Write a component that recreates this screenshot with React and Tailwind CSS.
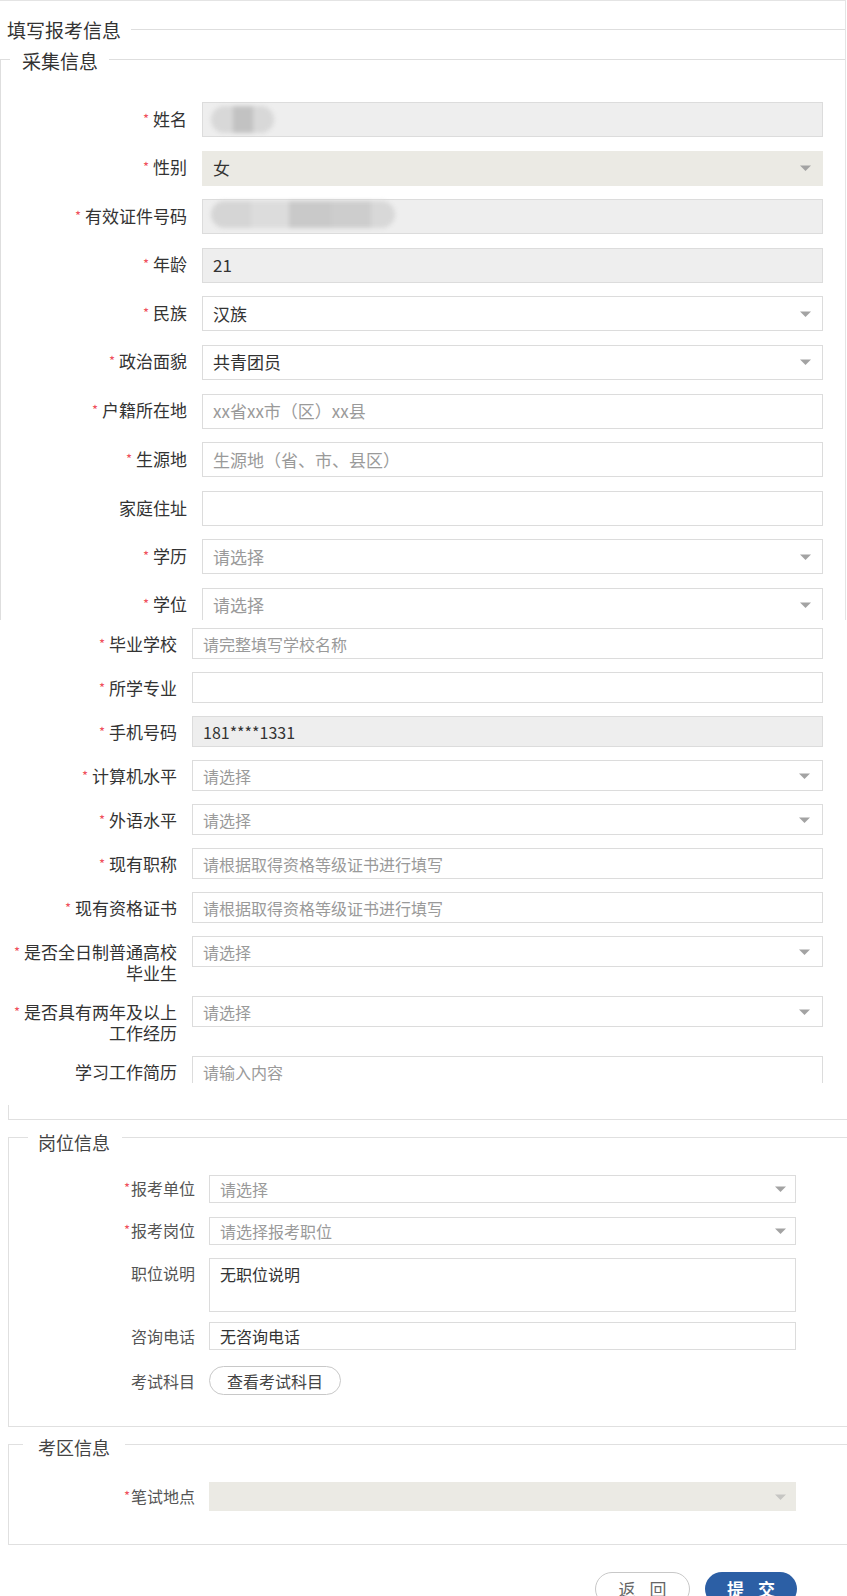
const F = "font-['Noto_Sans_CJK_SC','Microsoft_YaHei',sans-serif]";

function Star({ tight }) {
  return (
    <span className={`text-[#ef4f5b] text-[13px] relative top-[-2px] ${tight ? "mr-[1px]" : "mr-[4px]"}`}>*</span>
  );
}

function Caret({ className = "" }) {
  return (
    <svg width="11" height="6" viewBox="0 0 11 6" className={className}>
      <path d="M0 0.5h11L5.5 6z" fill="#a3a3a3" />
    </svg>
  );
}

function NameBlob() {
  return (
    <div className="flex items-center blur-[2px] -ml-[2px]">
      <div className="w-[22px] h-[27px] rounded-l-full bg-[#d8d8d8]" />
      <div className="w-[20px] h-[27px] bg-[#c2c2c2]" />
      <div className="w-[21px] h-[27px] rounded-r-full bg-[#d8d8d8]" />
    </div>
  );
}

function IdBlob() {
  return (
    <div className="flex items-center blur-[2px] -ml-[2px] -mt-[4px]">
      <div className="w-[40px] h-[27px] rounded-l-full bg-[#d5d5d5]" />
      <div className="w-[38px] h-[27px] bg-[#dcdcdc]" />
      <div className="w-[42px] h-[27px] bg-[#c9c9c9]" />
      <div className="w-[40px] h-[27px] bg-[#cdcdcd]" />
      <div className="w-[24px] h-[27px] rounded-r-full bg-[#d8d8d8]" />
    </div>
  );
}

function Field({ f, w, h, text, caretCls }) {
  const bg =
    f.kind === "disabled" ? "bg-[#eeeeee]" : f.kind === "beige" ? "bg-[#ebeae4]" : "bg-white";
  const border = f.kind === "beige" ? "border-[#ebeae4]" : "border-[#dcdcdc]";
  return (
    <div
      className={`flex items-center justify-between border ${border} ${bg} pl-[10px] ${w} ${h}`}
    >
      <div className={`${text} whitespace-nowrap`}>
        {f.blob === "name" ? (
          <NameBlob />
        ) : f.blob === "id" ? (
          <IdBlob />
        ) : f.value ? (
          <span className="text-[#333]">{f.value}</span>
        ) : (
          <span className="text-[#9a9a9a]">{f.ph}</span>
        )}
      </div>
      {f.select && <Caret className={caretCls} />}
    </div>
  );
}

const topRows = [
  { label: "姓名", req: true, kind: "disabled", blob: "name" },
  { label: "性别", req: true, kind: "beige", select: true, value: "女" },
  { label: "有效证件号码", req: true, kind: "disabled", blob: "id" },
  { label: "年龄", req: true, kind: "disabled", value: "21" },
  { label: "民族", req: true, select: true, value: "汉族" },
  { label: "政治面貌", req: true, select: true, value: "共青团员" },
  { label: "户籍所在地", req: true, ph: "xx省xx市（区）xx县" },
  { label: "生源地", req: true, ph: "生源地（省、市、县区）" },
  { label: "家庭住址", req: false, ph: "" },
  { label: "学历", req: true, select: true, ph: "请选择" },
  { label: "学位", req: true, select: true, ph: "请选择" },
];

const midRows = [
  { label: "毕业学校", req: true, ph: "请完整填写学校名称" },
  { label: "所学专业", req: true, ph: "" },
  { label: "手机号码", req: true, kind: "disabled", value: "181****1331" },
  { label: "计算机水平", req: true, select: true, ph: "请选择" },
  { label: "外语水平", req: true, select: true, ph: "请选择" },
  { label: "现有职称", req: true, ph: "请根据取得资格等级证书进行填写" },
  { label: "现有资格证书", req: true, ph: "请根据取得资格等级证书进行填写" },
  { label: "是否全日制普通高校", label2: "毕业生", req: true, select: true, ph: "请选择" },
  { label: "是否具有两年及以上", label2: "工作经历", req: true, select: true, ph: "请选择" },
];

export default function App() {
  return (
    <div className={`w-[847px] h-[1596px] overflow-hidden bg-white ${F}`}>
      {/* Block A */}
      <div className="h-[620px] overflow-hidden w-[846px] border-t border-r border-[#e4e4e4]">
        <div className="mt-[28px] border-t border-[#dedede]">
          <div className="-mt-[13px] w-fit bg-white pl-[7px] pr-[10px] text-[19px] leading-[26px] text-[#333]">
            填写报考信息
          </div>
          <div className="mt-[16px] border-t border-l border-[#dedede] pb-[40px]">
            <div className="-mt-[12px] ml-[9px] w-fit bg-white pl-[12px] pr-[11px] text-[19px] leading-[26px] text-[#333]">
              采集信息
            </div>
            <div className="mt-[28px] flex flex-col gap-[13.6px]">
              {topRows.map((r) => (
                <div key={r.label} className="flex items-center h-[35px]">
                  <div className="w-[186px] text-right text-[17px] leading-[20px] text-[#333] whitespace-nowrap">
                    {r.req && <Star />}
                    {r.label}
                  </div>
                  <div className="ml-[15px]">
                    <Field
                      f={r}
                      w="w-[621px]"
                      h="h-[35px]"
                      text="text-[17px] leading-[20px]"
                      caretCls="mr-[11px]"
                    />
                  </div>
                </div>
              ))}
            </div>
          </div>
        </div>
      </div>

      {/* Block B */}
      <div className="h-[463px] overflow-hidden pt-[8px]">
        <div className="flex flex-col gap-[13px]">
          {midRows.map((r) => (
            <div key={r.label} className={`flex items-start ${r.label2 ? "h-[47px]" : "h-[31px]"}`}>
              <div className="w-[177px] pt-[6px] text-right text-[17px] leading-[19px] text-[#333] whitespace-nowrap">
                {r.req && <Star />}
                {r.label}
                {r.label2 && (
                  <>
                    <br />
                    {r.label2}
                  </>
                )}
              </div>
              <div className="ml-[15px]">
                <Field
                  f={r}
                  w="w-[631px]"
                  h="h-[31px]"
                  text="text-[16px] leading-[20px]"
                  caretCls="mr-[12px]"
                />
              </div>
            </div>
          ))}
          <div className="flex items-start h-[28px]">
            <div className="w-[177px] pt-[6px] text-right text-[17px] leading-[19px] text-[#333] whitespace-nowrap">
              学习工作简历
            </div>
            <div className="ml-[15px] w-[631px] h-[28px] border-t border-l border-r border-[#dcdcdc] pl-[10px] pt-[6px] text-[16px] leading-[18px] text-[#9a9a9a]">
              请输入内容
            </div>
          </div>
        </div>
      </div>

      {/* Block C */}
      <div className="pt-[22px]">
        <div className="ml-[8px] h-[15px] border-l border-b border-[#e0e0e0]" />

        {/* 岗位信息 */}
        <div className="mt-[17px] ml-[8px] border-t border-l border-b border-[#e0e0e0] pb-[31px]">
          <div className="-mt-[9px] ml-[19px] w-fit bg-white pl-[10px] pr-[12px] text-[18px] leading-[26px] text-[#444]">
            岗位信息
          </div>
          <div className="mt-[20px] flex flex-col">
            <div className="flex items-center h-[28px]">
              <div className="w-[186px] text-right text-[16px] leading-[18px] text-[#555]">
                <Star tight />
                报考单位
              </div>
              <div className="ml-[14px]">
                <Field
                  f={{ select: true, ph: "请选择" }}
                  w="w-[587px]"
                  h="h-[28px]"
                  text="text-[16px] leading-[18px]"
                  caretCls="mr-[9px]"
                />
              </div>
            </div>
            <div className="flex items-center h-[28px] mt-[14px]">
              <div className="w-[186px] text-right text-[16px] leading-[18px] text-[#555]">
                <Star tight />
                报考岗位
              </div>
              <div className="ml-[14px]">
                <Field
                  f={{ select: true, ph: "请选择报考职位" }}
                  w="w-[587px]"
                  h="h-[28px]"
                  text="text-[16px] leading-[18px]"
                  caretCls="mr-[9px]"
                />
              </div>
            </div>
            <div className="flex items-start h-[54px] mt-[13px]">
              <div className="w-[186px] pt-[6px] text-right text-[16px] leading-[18px] text-[#555]">
                职位说明
              </div>
              <div className="ml-[14px] w-[587px] h-[54px] border border-[#dcdcdc] pl-[10px] pt-[6px] text-[16px] leading-[18px] text-[#333]">
                无职位说明
              </div>
            </div>
            <div className="flex items-center h-[28px] mt-[10px]">
              <div className="w-[186px] text-right text-[16px] leading-[18px] text-[#555]">咨询电话</div>
              <div className="ml-[14px]">
                <Field
                  f={{ value: "无咨询电话" }}
                  w="w-[587px]"
                  h="h-[28px]"
                  text="text-[16px] leading-[18px]"
                />
              </div>
            </div>
            <div className="flex items-center h-[29px] mt-[16px]">
              <div className="w-[186px] text-right text-[16px] leading-[18px] text-[#555]">考试科目</div>
              <div className="ml-[14px] w-[132px] h-[29px] rounded-full border border-[#c8c8c8] flex items-center justify-center text-[16px] leading-[18px] text-[#444]">
                查看考试科目
              </div>
            </div>
          </div>
        </div>

        {/* 考区信息 */}
        <div className="mt-[17px] ml-[8px] border-t border-l border-b border-[#e0e0e0] pb-[33px]">
          <div className="-mt-[11px] ml-[14px] w-fit bg-white pl-[15px] pr-[15px] text-[18px] leading-[26px] text-[#444]">
            考区信息
          </div>
          <div className="mt-[22px] flex items-center h-[29px]">
            <div className="w-[186px] text-right text-[16px] leading-[18px] text-[#555]">
              <Star tight />
              笔试地点
            </div>
            <div className="ml-[14px]">
              <Field
                f={{ kind: "beige", select: true, ph: "" }}
                w="w-[587px]"
                h="h-[29px]"
                text="text-[16px] leading-[18px]"
                caretCls="mr-[9px] opacity-50"
              />
            </div>
          </div>
        </div>

        <div className="mt-[27px] flex justify-end pr-[50px] gap-[15px]">
          <div className="w-[95px] h-[34px] rounded-full border border-[#c8c8c8] bg-white flex items-center justify-center gap-[14px] text-[17px] leading-[20px] text-[#666]">
            <span>返</span>
            <span>回</span>
          </div>
          <div className="w-[92px] h-[34px] rounded-full bg-[#2c5fa5] flex items-center justify-center gap-[14px] text-[17px] leading-[20px] font-bold text-white">
            <span>提</span>
            <span>交</span>
          </div>
        </div>
      </div>
    </div>
  );
}
